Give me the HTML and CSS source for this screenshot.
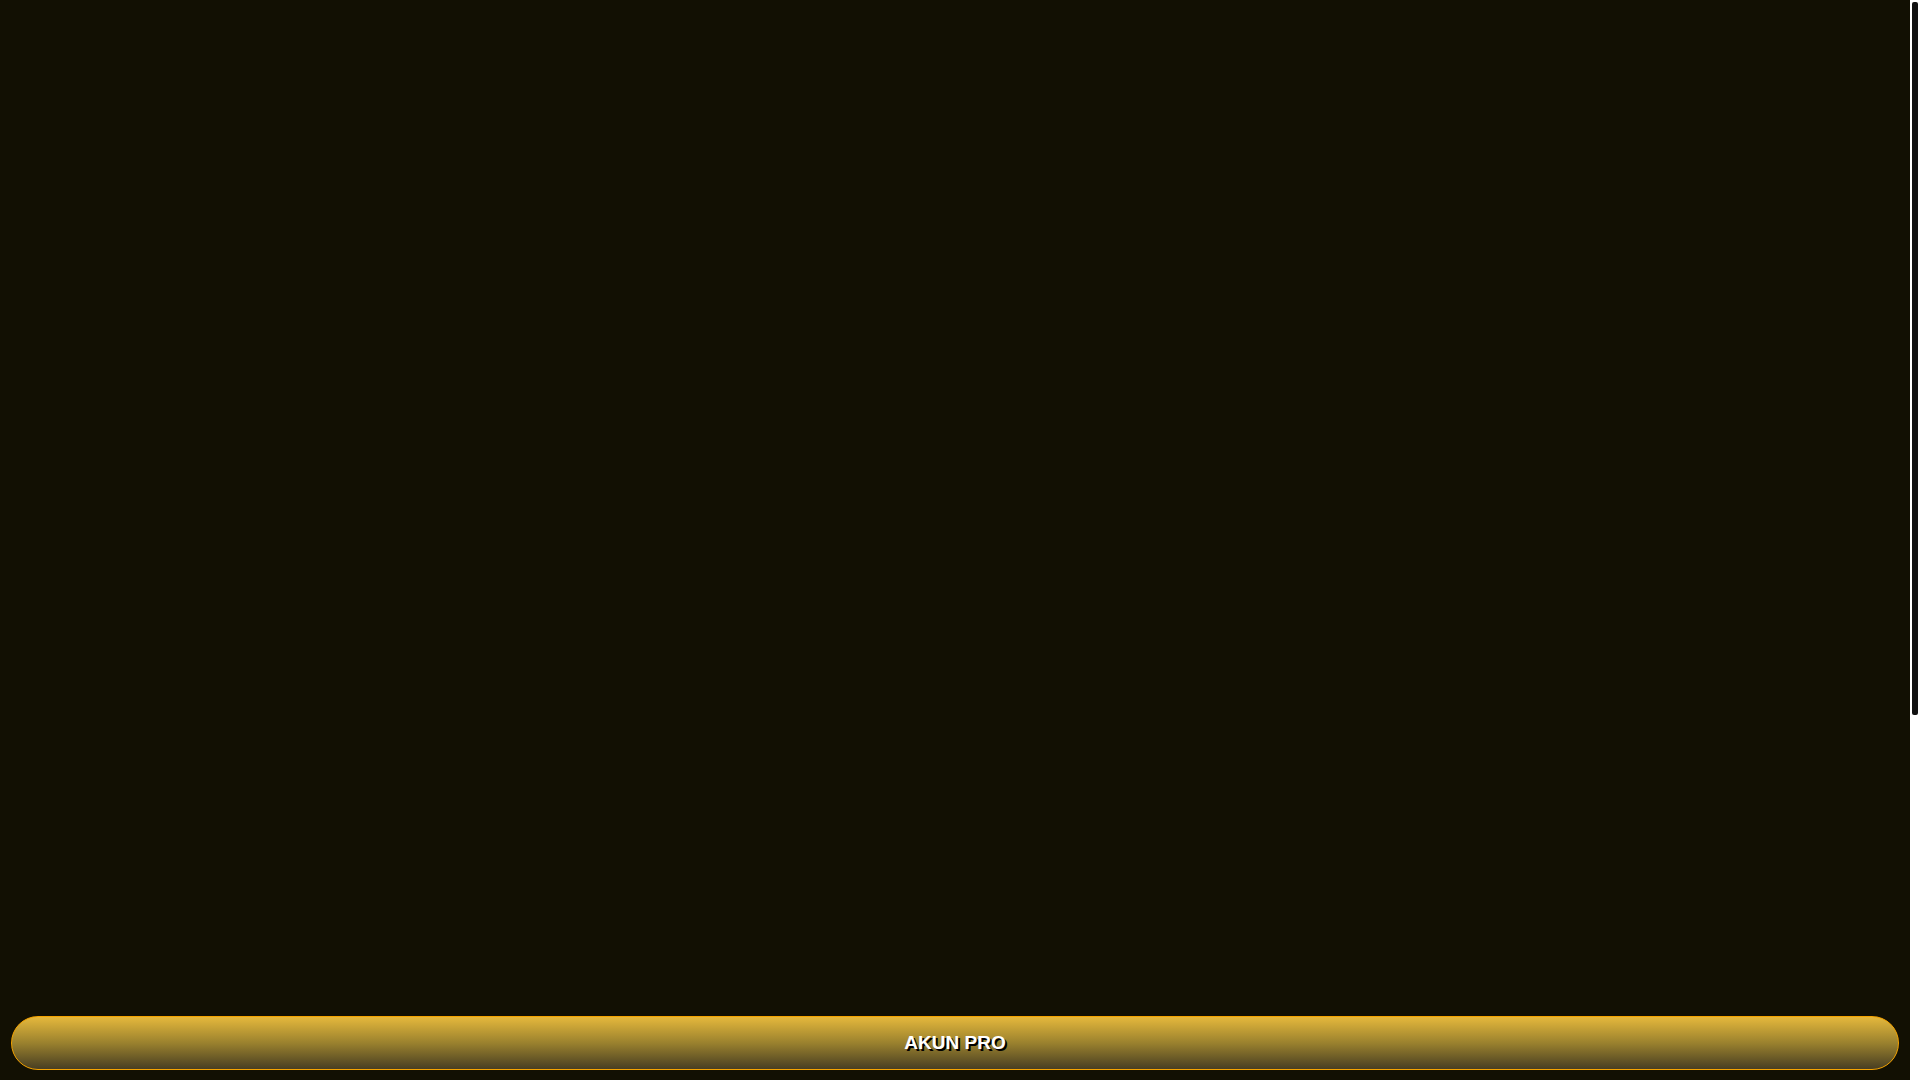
FILE: index.html
```html
<!DOCTYPE html>
<html lang="id">
<head>
<meta charset="utf-8">
<title>AKUN PRO</title>
<link rel="stylesheet" href="styles.css">
</head>
<body>
<div class="screen">
  <main class="viewport">
    <a class="pro-button" href="#">AKUN PRO</a>
  </main>
  <div class="scrollbar">
    <div class="scroll-thumb"></div>
  </div>
</div>
</body>
</html>
```

FILE: styles.css
```css
html, body {
  margin: 0;
  height: 100%;
  overflow: hidden;
  background: #121003;
  font-family: "Liberation Sans", Arial, sans-serif;
}
.screen {
  display: flex;
  height: 100vh;
}
.viewport {
  flex: 1;
  display: flex;
  flex-direction: column;
  justify-content: flex-end;
  padding: 0 11px 10px 11px;
  background: #121003;
}
.scrollbar {
  width: 10px;
  background: #ffffff;
  padding: 2px 2px 0 2px;
  box-sizing: border-box;
}
.scroll-thumb {
  height: 713px;
  background: #111111;
  border-radius: 2px;
}
.pro-button {
  display: flex;
  align-items: center;
  justify-content: center;
  height: 52px;
  border: 1px solid #f5a300;
  border-radius: 27px;
  background: linear-gradient(to bottom, #e5b83c 0%, #9a812e 50%, #483e22 100%);
  color: #ffffff;
  font-weight: bold;
  font-size: 19px;
  text-decoration: none;
  text-shadow: 2px 2px 0 #000000;
}
```
